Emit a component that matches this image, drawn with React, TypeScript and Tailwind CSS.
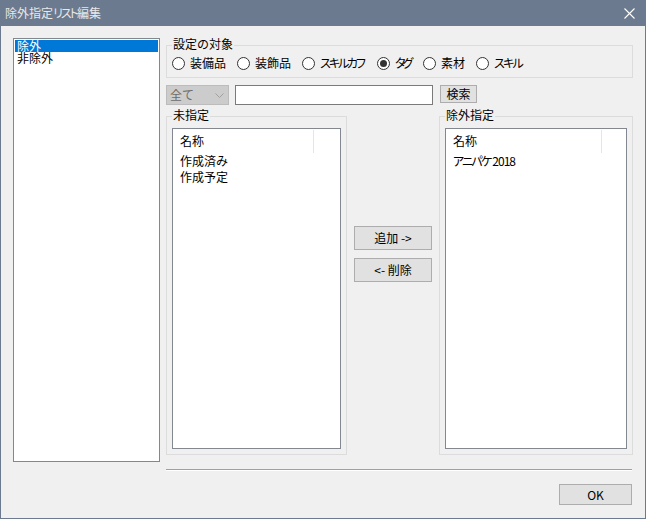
import React from "react";

const targets = [
  { label: "装備品", width: "w-[65px]", checked: false, tight: "" },
  { label: "装飾品", width: "w-[65px]", checked: false, tight: "" },
  { label: "スキルカフ", width: "w-[75px]", checked: false, tight: "tracking-[-2px]" },
  { label: "タグ", width: "w-[46px]", checked: true, tight: "tracking-[-3px]" },
  { label: "素材", width: "w-[53px]", checked: false, tight: "" },
  { label: "スキル", width: "w-[60px]", checked: false, tight: "tracking-[-1.7px]" },
];

const Radio = ({ label, width, checked, tight }: { label: string; width: string; checked: boolean; tight: string }) => (
  <div className={`flex items-center gap-[5px] ${width}`}>
    <span className="flex h-[13px] w-[13px] shrink-0 items-center justify-center rounded-full border border-[#333] bg-white">
      {checked && <span className="h-[7px] w-[7px] rounded-full bg-[#333]" />}
    </span>
    <span className={`whitespace-nowrap [font-feature-settings:'palt'] ${tight}`}>{label}</span>
  </div>
);

const NameList = ({ headerWidth, children }: { headerWidth: string; children: React.ReactNode }) => (
  <div className="mt-[5px] h-[321px] border border-[#828790] bg-white">
    <div className="flex h-[24px] pt-[1px]">
      <div className={`flex items-center border-r border-[#e5e5e5] pb-[2px] pl-[7px] ${headerWidth}`}>名称</div>
    </div>
    <div className="pl-[7px] leading-[16px] [font-feature-settings:'palt']">{children}</div>
  </div>
);

const Group = ({ title, width, children }: { title: string; width: string; children: React.ReactNode }) => (
  <fieldset className={`border border-[#dcdcdc] px-[5px] pb-[5px] ${width}`}>
    <legend className="px-[1px] pb-[2px] leading-[12px]">{title}</legend>
    {children}
  </fieldset>
);

const PushButton = ({ label, className }: { label: string; className: string }) => (
  <button className={`flex items-center justify-center border border-[#adadad] bg-[#e1e1e1] ${className}`}>
    {label}
  </button>
);

export default function App() {
  return (
    <div className="flex h-[519px] w-[646px] flex-col overflow-hidden border border-t-0 border-[#6b7a8f] bg-[#f0f0f0] font-['Noto_Sans_CJK_JP',sans-serif] text-[12px] text-black">
      {/* Title bar */}
      <div className="flex h-[26px] shrink-0 items-center justify-between bg-[#6b7a8f] pl-[4px] pr-[10px] text-[#e8e8e8]">
        <span className="[font-feature-settings:'palt']">
          除外指定<span className="tracking-[-2px]">リスト</span>編集
        </span>
        <svg width="11" height="11" viewBox="0 0 11 11" stroke="#fff" strokeWidth="1.1">
          <path d="M0.5 0.5L10.5 10.5M10.5 0.5L0.5 10.5" />
        </svg>
      </div>

      <div className="flex flex-1 pl-[12px] pt-[12px]">
        {/* Left list */}
        <div className="h-[424px] w-[147px] border border-[#828790] bg-white p-[1px] leading-[12px]">
          <div className="h-[12px] bg-[#0078d7] pl-[2px] text-white">除外</div>
          <div className="h-[12px] pl-[2px]">非除外</div>
        </div>

        <div className="ml-[6px] flex w-[467px] flex-col">
          <Group title="設定の対象" width="w-[467px]">
            <div className="-mb-[2px] flex h-[22px] items-center">
              {targets.map((t) => (
                <Radio key={t.label} {...t} />
              ))}
            </div>
          </Group>

          {/* Search row */}
          <div className="mt-[7px] flex items-start">
            <div className="flex h-[20px] w-[63px] items-center justify-between border border-[#bcbcbc] bg-[#cccccc] pl-[3px] pr-[4px] text-[#6d6d6d]">
              <span>全て</span>
              <svg width="9" height="5" viewBox="0 0 9 5" fill="none" stroke="#a0a0a0">
                <path d="M0.5 0.5L4.5 4.5L8.5 0.5" />
              </svg>
            </div>
            <div className="ml-[6px] h-[20px] w-[198px] border border-[#7a7a7a] bg-white" />
            <PushButton label="検索" className="ml-[7px] h-[18px] w-[37px]" />
          </div>

          {/* Lists */}
          <div className="mt-[4px] flex">
            <Group title="未指定" width="w-[181px]">
              <NameList headerWidth="w-[141px]">
                <div>作成済み</div>
                <div>作成予定</div>
              </NameList>
            </Group>
            <div className="ml-[7px] flex w-[85px] flex-col gap-[8px] pt-[117px]">
              <PushButton label="追加 ->" className="h-[24px] w-[78px]" />
              <PushButton label="<- 削除" className="h-[24px] w-[78px]" />
            </div>
            <Group title="除外指定" width="w-[194px]">
              <NameList headerWidth="w-[156px]">
                <div>
                  <span className="tracking-[-1.8px]">アニパケ</span>
                  <span className="ml-[2px] tracking-[-1px]">2018</span>
                </div>
              </NameList>
            </Group>
          </div>

          <div className="mt-[14px] h-[2px] w-[466px] border-t border-[#a0a0a0] bg-white" />

          <div className="mt-[13px] flex w-[466px] justify-end">
            <PushButton label="OK" className="h-[21px] w-[73px]" />
          </div>
        </div>
      </div>
    </div>
  );
}
